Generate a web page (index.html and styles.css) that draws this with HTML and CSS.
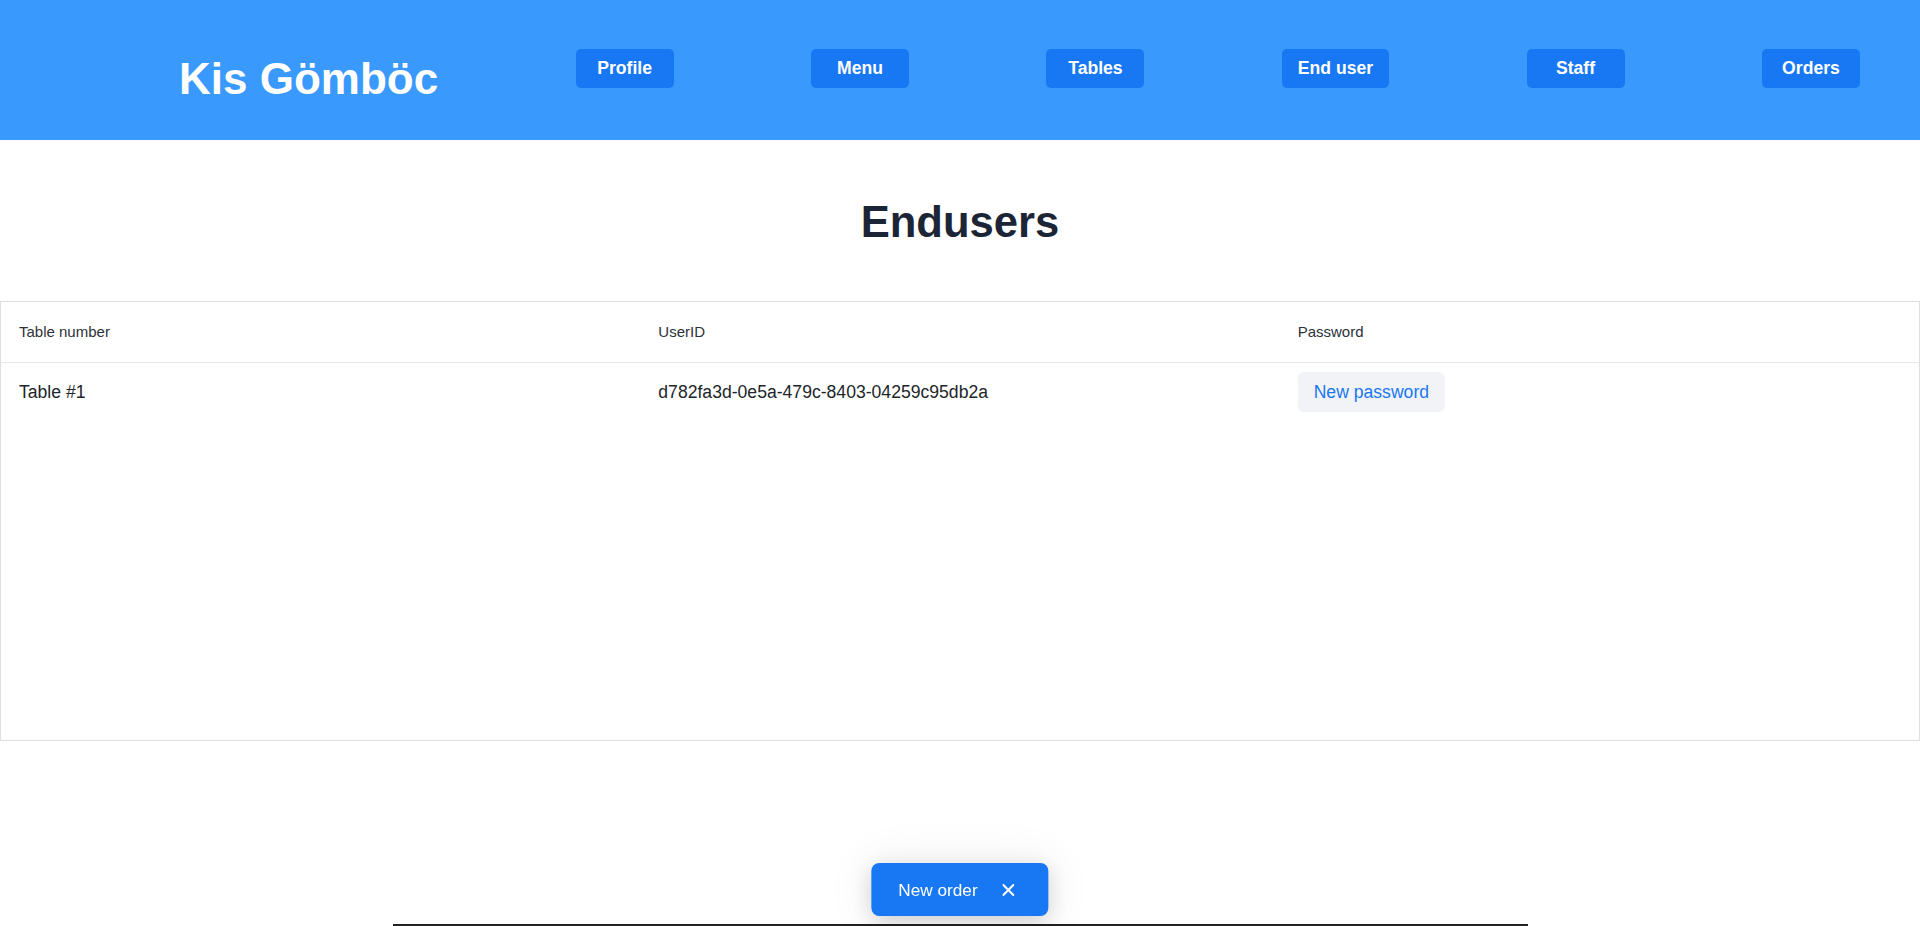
FILE: index.html
```html
<!DOCTYPE html>
<html lang="hu">
<head>
<meta charset="utf-8">
<title>Endusers</title>
<link rel="stylesheet" href="styles.css">
</head>
<body>
<header class="topbar">
  <h1 class="brand">Kis Gömböc</h1>
  <a class="nav-btn" href="#">Profile</a>
  <a class="nav-btn" href="#">Menu</a>
  <a class="nav-btn" href="#">Tables</a>
  <a class="nav-btn" href="#">End user</a>
  <a class="nav-btn" href="#">Staff</a>
  <a class="nav-btn" href="#">Orders</a>
</header>
<main class="content">
  <h2 class="page-title">Endusers</h2>
  <div class="table-wrap">
    <table class="users">
      <thead>
        <tr>
          <th>Table number</th>
          <th>UserID</th>
          <th>Password</th>
        </tr>
      </thead>
      <tbody>
        <tr>
          <td>Table #1</td>
          <td>d782fa3d-0e5a-479c-8403-04259c95db2a</td>
          <td><button class="pw-btn" type="button">New password</button></td>
        </tr>
      </tbody>
    </table>
  </div>
  <div class="bottom-rule"></div>
</main>
<div class="toast">
  <span class="toast-text">New order</span>
  <button class="toast-close" type="button" aria-label="Close">
    <svg width="12" height="12" viewBox="0 0 12 12"><path d="M1 1 L11 11 M11 1 L1 11" stroke="#fff" stroke-width="2" stroke-linecap="round"/></svg>
  </button>
</div>
</body>
</html>
```
FILE: styles.css
```css
* { box-sizing: border-box; }
html, body { margin: 0; padding: 0; }
body {
  font-family: "Liberation Sans", Arial, sans-serif;
  background: #ffffff;
  color: #212529;
  overflow: hidden;
}
.topbar {
  height: 140px;
  background: #3a99fd;
  display: flex;
  align-items: flex-start;
  justify-content: space-between;
  padding: 49px 60px 0 179px;
}
.brand {
  margin: 5px 0 0 0;
  font-size: 44px;
  line-height: 50px;
  font-weight: 700;
  color: #ffffff;
}
.nav-btn {
  display: inline-block;
  min-width: 98px;
  padding: 6px 15px;
  border: 1px solid transparent;
  border-radius: 5px;
  background: #1877f2;
  color: #ffffff;
  font-size: 17.6px;
  line-height: 25px;
  font-weight: 700;
  text-align: center;
  text-decoration: none;
}
.page-title {
  margin: 57px 0 54px;
  text-align: center;
  font-size: 43.6px;
  line-height: 50px;
  font-weight: 700;
  color: #1c2535;
}
.table-wrap {
  height: 440px;
  border: 1px solid #dcdfe3;
}
.users {
  width: 100%;
  border-collapse: collapse;
  table-layout: fixed;
}
.users th {
  text-align: left;
  font-weight: 400;
  font-size: 15px;
  line-height: 18px;
  color: #2d3139;
  padding: 21px 18px;
  border-bottom: 1px solid #e4e6ea;
}
.users td {
  font-size: 17.6px;
  line-height: 22px;
  color: #212529;
  padding: 9px 18px;
  vertical-align: middle;
}
.pw-btn {
  font-family: inherit;
  font-size: 17.6px;
  line-height: 26px;
  padding: 6px 15px;
  border: 1px solid transparent;
  border-radius: 6px;
  background: #f1f3f6;
  color: #1b77f2;
  cursor: pointer;
}
.bottom-rule {
  width: 1135px;
  margin: 183px auto 0;
  height: 2px;
  background: #222222;
}
.toast {
  position: fixed;
  left: 50%;
  bottom: 10px;
  transform: translateX(-50%);
  height: 53px;
  display: flex;
  align-items: center;
  padding: 0 22px 0 27px;
  background: #1877f2;
  border-radius: 8px;
  box-shadow: 0 6px 22px rgba(0, 0, 0, 0.16), 0 0 44px 6px rgba(0, 0, 0, 0.06);
  color: #ffffff;
}
.toast-text {
  font-size: 17.2px;
  line-height: 22px;
}
.toast-close {
  width: 36px;
  height: 36px;
  margin-left: 13px;
  padding: 0;
  border: 0;
  background: transparent;
  display: flex;
  align-items: center;
  justify-content: center;
  cursor: pointer;
}
```
